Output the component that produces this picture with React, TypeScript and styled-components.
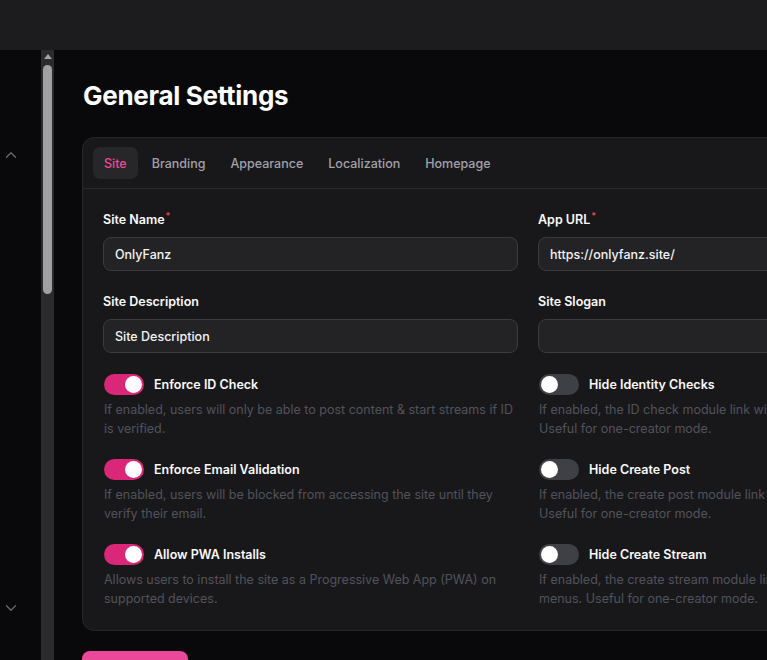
import React from "react";
import styled, { createGlobalStyle } from "styled-components";

const Global = createGlobalStyle`
  html, body { margin: 0; padding: 0; background: #09090b; overflow: hidden; }
  body { font-family: Inter, "Noto Sans", sans-serif; color: #fafafa; -webkit-font-smoothing: antialiased; }
  * { box-sizing: border-box; }
`;

const Page = styled.div`
  width: 767px;
  height: 660px;
  display: flex;
  flex-direction: column;
  overflow: hidden;
`;

const TopBar = styled.div`
  height: 50px;
  flex: none;
  background: #1c1c1f;
`;

const Body = styled.div`
  flex: 1;
  display: flex;
  min-height: 0;
`;

const Sidebar = styled.div`
  width: 41px;
  flex: none;
  background: #09090b;
  display: flex;
  flex-direction: column;
  align-items: flex-start;
  justify-content: space-between;
  padding: 96px 0 43px 2px;
  color: #6b6b73;
`;

const ScrollTrack = styled.div`
  width: 13px;
  flex: none;
  background: #2b2b2c;
  display: flex;
  flex-direction: column;
  align-items: center;
  padding-top: 4px;
`;

const ScrollArrow = styled.div`
  width: 0;
  height: 0;
  border-left: 4px solid transparent;
  border-right: 4px solid transparent;
  border-bottom: 5px solid #a3a3a3;
`;

const ScrollThumb = styled.div`
  margin-top: 6px;
  width: 9px;
  height: 229px;
  border-radius: 5px;
  background: #a0a0a0;
`;

const Main = styled.div`
  flex: 1;
  padding: 28px 0 0 28px;
  display: flex;
  flex-direction: column;
  min-width: 0;
`;

const Title = styled.h1`
  margin: 0 0 23px 1px;
  font-size: 26px;
  line-height: 36px;
  font-weight: 700;
  letter-spacing: -0.3px;
  color: #ffffff;
`;

const Card = styled.div`
  width: 900px;
  flex: none;
  background: #18181b;
  border: 1px solid #27272a;
  border-radius: 12px;
`;

const Tabs = styled.div`
  display: flex;
  gap: 3px;
  padding: 9px 10px 9px;
  border-bottom: 1px solid #2a2a2e;
`;

const Tab = styled.div<{ $active?: boolean }>`
  height: 32px;
  padding: 0 11px;
  display: flex;
  align-items: center;
  border-radius: 7px;
  font-size: 12.5px;
  font-weight: 500;
  color: ${(p) => (p.$active ? "#ec4899" : "#a1a1aa")};
  background: ${(p) => (p.$active ? "#27272a" : "transparent")};
`;

const Form = styled.div`
  padding: 21px 20px 22px 20px;
  display: grid;
  grid-template-columns: 415px 415px;
  column-gap: 20px;
  row-gap: 21px;
`;

const Field = styled.div`
  display: flex;
  flex-direction: column;
  gap: 8px;
`;

const Label = styled.div`
  font-size: 12.5px;
  line-height: 19px;
  font-weight: 600;
  color: #fafafa;
`;

const Required = styled.sup`
  color: #ef4444;
  font-size: 9px;
  margin-left: 1px;
  vertical-align: 5px;
  line-height: 0;
`;

const Input = styled.div`
  height: 34px;
  border: 1px solid #3a3a3f;
  background: #232326;
  border-radius: 8px;
  padding: 0 11px;
  display: flex;
  align-items: center;
  font-size: 12.5px;
  color: #f4f4f5;
  font-weight: 500;
`;

const ToggleItem = styled.div`
  display: flex;
  flex-direction: column;
  gap: 6px;
`;

const ToggleRow = styled.div`
  display: flex;
  align-items: center;
  gap: 10px;
  height: 20px;
  padding-left: 1px;
`;

const Switch = styled.div<{ $on?: boolean }>`
  width: 40px;
  height: 21px;
  border-radius: 11px;
  background: ${(p) => (p.$on ? "#db2777" : "#3f3f46")};
  display: flex;
  align-items: center;
  justify-content: ${(p) => (p.$on ? "flex-end" : "flex-start")};
  padding: 0 2px;
`;

const Knob = styled.div`
  width: 17px;
  height: 17px;
  border-radius: 50%;
  background: #ffffff;
`;

const ToggleLabel = styled.div`
  font-size: 12.5px;
  font-weight: 600;
  color: #fafafa;
`;

const Desc = styled.div`
  font-size: 12.5px;
  line-height: 19px;
  color: #52525b;
  padding-left: 1px;
  padding-right: 4px;
`;

const SaveButton = styled.div`
  margin-top: 20px;
  width: 106px;
  height: 36px;
  border-radius: 8px;
  background: #ec4899;
  flex: none;
`;

const ChevronUp = () => (
  <svg width="18" height="18" viewBox="0 0 24 24" fill="none" stroke="currentColor" strokeWidth="1.6" strokeLinecap="round" strokeLinejoin="round">
    <path d="m18 15-6-6-6 6" />
  </svg>
);
const ChevronDown = () => (
  <svg width="18" height="18" viewBox="0 0 24 24" fill="none" stroke="currentColor" strokeWidth="1.6" strokeLinecap="round" strokeLinejoin="round">
    <path d="m6 9 6 6 6-6" />
  </svg>
);

const toggles = [
  { on: true, label: "Enforce ID Check", desc: "If enabled, users will only be able to post content & start streams if ID is verified." },
  { on: false, label: "Hide Identity Checks", desc: "If enabled, the ID check module link will be hidden from menus. Useful for one-creator mode." },
  { on: true, label: "Enforce Email Validation", desc: "If enabled, users will be blocked from accessing the site until they verify their email." },
  { on: false, label: "Hide Create Post", desc: "If enabled, the create post module link will be hidden from menus. Useful for one-creator mode." },
  { on: true, label: "Allow PWA Installs", desc: "Allows users to install the site as a Progressive Web App (PWA) on supported devices." },
  { on: false, label: "Hide Create Stream", desc: "If enabled, the create stream module link will be hidden from the menus. Useful for one-creator mode." },
];

export default function App() {
  return (
    <>
      <Global />
      <Page>
        <TopBar />
        <Body>
          <Sidebar>
            <ChevronUp />
            <ChevronDown />
          </Sidebar>
          <ScrollTrack>
            <ScrollArrow />
            <ScrollThumb />
          </ScrollTrack>
          <Main>
            <Title>General Settings</Title>
            <Card>
              <Tabs>
                <Tab $active>Site</Tab>
                <Tab>Branding</Tab>
                <Tab>Appearance</Tab>
                <Tab>Localization</Tab>
                <Tab>Homepage</Tab>
              </Tabs>
              <Form>
                <Field>
                  <Label>Site Name<Required>*</Required></Label>
                  <Input>OnlyFanz</Input>
                </Field>
                <Field>
                  <Label>App URL<Required>*</Required></Label>
                  <Input>https://onlyfanz.site/</Input>
                </Field>
                <Field>
                  <Label>Site Description</Label>
                  <Input>Site Description</Input>
                </Field>
                <Field>
                  <Label>Site Slogan</Label>
                  <Input />
                </Field>
                {toggles.map((t) => (
                  <ToggleItem key={t.label}>
                    <ToggleRow>
                      <Switch $on={t.on}><Knob /></Switch>
                      <ToggleLabel>{t.label}</ToggleLabel>
                    </ToggleRow>
                    <Desc>{t.desc}</Desc>
                  </ToggleItem>
                ))}
              </Form>
            </Card>
            <SaveButton />
          </Main>
        </Body>
      </Page>
    </>
  );
}
